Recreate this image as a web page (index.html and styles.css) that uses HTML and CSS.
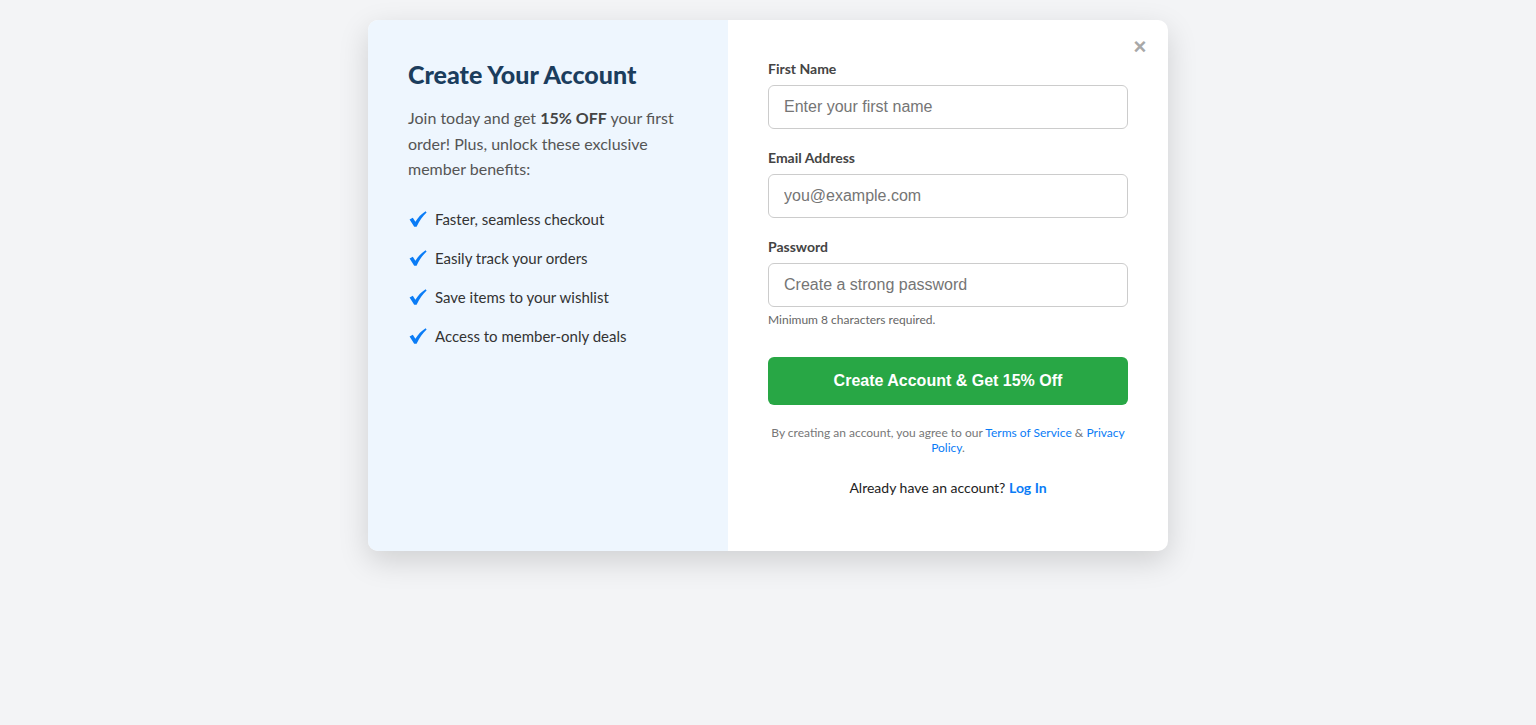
FILE: index.html
```html
<!DOCTYPE html>
<html lang="en">
<head>
<meta charset="utf-8">
<title>Create Your Account</title>
<link rel="stylesheet" href="styles.css">
</head>
<body>
<div class="page">
  <div class="modal">
    <button class="close" type="button" aria-label="Close">&times;</button>
    <section class="promo">
      <h1 class="promo-title">Create Your Account</h1>
      <p class="promo-text">Join today and get <strong>15% OFF</strong> your first order! Plus, unlock these exclusive member benefits:</p>
      <ul class="benefits">
        <li class="benefit"><svg class="check" viewBox="0 0 18 18" width="18" height="18"><path d="M0.6 9.4 L3.8 7.8 L6.4 11.8 C9 7.4 12.4 3.8 16.6 1.2 L17.6 2.4 C13.6 6.2 10.4 10.6 7.6 16.8 L5.2 16.8 Z"/></svg><span>Faster, seamless checkout</span></li>
        <li class="benefit"><svg class="check" viewBox="0 0 18 18" width="18" height="18"><path d="M0.6 9.4 L3.8 7.8 L6.4 11.8 C9 7.4 12.4 3.8 16.6 1.2 L17.6 2.4 C13.6 6.2 10.4 10.6 7.6 16.8 L5.2 16.8 Z"/></svg><span>Easily track your orders</span></li>
        <li class="benefit"><svg class="check" viewBox="0 0 18 18" width="18" height="18"><path d="M0.6 9.4 L3.8 7.8 L6.4 11.8 C9 7.4 12.4 3.8 16.6 1.2 L17.6 2.4 C13.6 6.2 10.4 10.6 7.6 16.8 L5.2 16.8 Z"/></svg><span>Save items to your wishlist</span></li>
        <li class="benefit"><svg class="check" viewBox="0 0 18 18" width="18" height="18"><path d="M0.6 9.4 L3.8 7.8 L6.4 11.8 C9 7.4 12.4 3.8 16.6 1.2 L17.6 2.4 C13.6 6.2 10.4 10.6 7.6 16.8 L5.2 16.8 Z"/></svg><span>Access to member-only deals</span></li>
      </ul>
    </section>
    <section class="form-side">
      <form class="form">
        <div class="field">
          <label class="label" for="fname">First Name</label>
          <input class="input" id="fname" type="text" placeholder="Enter your first name">
        </div>
        <div class="field">
          <label class="label" for="email">Email Address</label>
          <input class="input" id="email" type="email" placeholder="you@example.com">
        </div>
        <div class="field">
          <label class="label" for="pw">Password</label>
          <input class="input" id="pw" type="password" placeholder="Create a strong password">
          <div class="hint">Minimum 8 characters required.</div>
        </div>
        <button class="submit" type="button">Create Account &amp; Get 15% Off</button>
        <p class="terms">By creating an account, you agree to our <a href="#">Terms of Service</a> &amp; <a href="#">Privacy Policy</a>.</p>
        <p class="login">Already have an account? <a href="#">Log In</a></p>
      </form>
    </section>
  </div>
</div>
</body>
</html>
```
FILE: styles.css
```css
* { box-sizing: border-box; }
html, body { margin: 0; padding: 0; }
body {
  background: #f3f4f6;
  font-family: Lato, "Open Sans", Arial, sans-serif;
  height: 725px;
}
.page {
  display: flex;
  justify-content: center;
  padding-top: 20px;
}
.modal {
  position: relative;
  width: 800px;
  height: 531px;
  display: flex;
  background: #fff;
  border-radius: 10px;
  overflow: hidden;
  box-shadow: 0 10px 30px rgba(0, 0, 0, 0.15);
}
.close {
  position: absolute;
  top: 15px;
  right: 20px;
  background: none;
  border: 0;
  padding: 0;
  width: 16px;
  height: 24px;
  font-family: "Liberation Sans", Arial, sans-serif;
  font-size: 22px;
  line-height: 24px;
  font-weight: bold;
  color: #a8a8a8;
  cursor: pointer;
}
.promo {
  width: 360px;
  flex: none;
  background: #eef6fe;
  padding: 40px;
}
.promo-title {
  margin: 0 0 16px;
  font-size: 25px;
  line-height: 29px;
  font-weight: 900;
  color: #1b3d5d;
}
.promo-text {
  margin: 0 0 25px;
  font-size: 16px;
  line-height: 25.6px;
  color: #555;
}
.promo-text strong { color: #444; font-weight: 700; }
.benefits {
  list-style: none;
  margin: 0;
  padding: 0;
}
.benefit {
  display: flex;
  align-items: center;
  gap: 8px;
  font-size: 15px;
  line-height: 24px;
  color: #333;
  margin-bottom: 15px;
}
.check {
  fill: #0a7cf6;
  flex: none;
  margin-left: 1px;
}
.form-side {
  flex: 1;
  padding: 40px;
}
.form { display: flex; flex-direction: column; }
.field { margin-bottom: 20px; }
.label {
  display: block;
  font-size: 14px;
  line-height: 17px;
  font-weight: 700;
  color: #444;
  margin-bottom: 8px;
}
.input {
  display: block;
  width: 100%;
  height: 44px;
  border: 1px solid #ccc;
  border-radius: 6px;
  padding: 0 15px;
  font-family: "Liberation Sans", Arial, sans-serif;
  font-size: 16px;
  color: #333;
  background: #fff;
  outline: none;
}
.input::placeholder { color: #757575; }
.hint {
  margin-top: 6px;
  font-size: 12px;
  line-height: 14px;
  color: #666;
}
.submit {
  margin-top: 10px;
  height: 48px;
  width: 100%;
  border: 0;
  border-radius: 6px;
  background: #28a745;
  color: #fff;
  font-family: "Liberation Sans", Arial, sans-serif;
  font-size: 16px;
  font-weight: 700;
  cursor: pointer;
}
.terms {
  margin: 20px 0 0;
  text-align: center;
  font-size: 12px;
  line-height: 15px;
  color: #777;
}
.terms a, .login a {
  color: #0a7cf6;
  text-decoration: none;
}
.login {
  margin: 24px 0 0;
  text-align: center;
  font-size: 14px;
  line-height: 17px;
  color: #222;
}
.login a { font-weight: 700; }
```
